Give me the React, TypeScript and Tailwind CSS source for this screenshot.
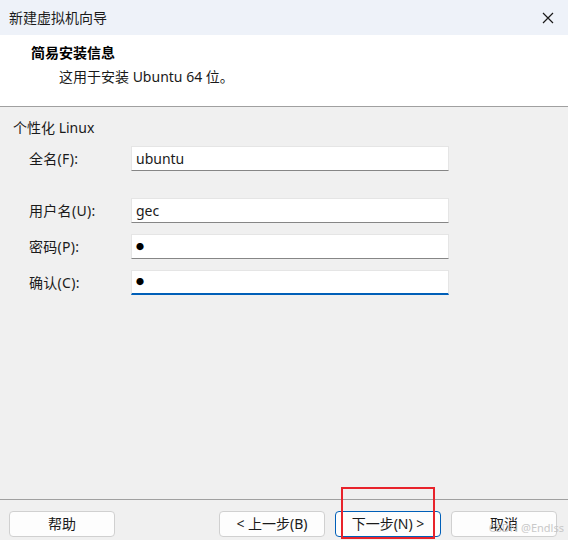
import React from "react";

const font = {
  fontFamily: '"Noto Sans", "Noto Sans CJK SC", sans-serif',
};

function Field({
  label,
  value,
  password,
  focused,
  className,
}: {
  label: string;
  value: string;
  password?: boolean;
  focused?: boolean;
  className?: string;
}) {
  return (
    <div className={"flex items-center " + (className ?? "")}>
      <div className="w-[131px] pl-[29px] shrink-0 text-[14px] leading-[20px] tracking-[0.3px] text-[#1a1a1a] whitespace-nowrap">
        {label}
      </div>
      <div
        className={
          "w-[318px] h-[25px] bg-white border border-[#e5e5e5] flex items-center pl-[4px] " +
          (focused
            ? "border-b-2 border-b-[#005fb8]"
            : "border-b border-b-[#868686]")
        }
      >
        {password ? (
          <span className="text-[8px] leading-none text-black">●</span>
        ) : (
          <span className="text-[14px] leading-[20px] text-[#1a1a1a]">{value}</span>
        )}
      </div>
    </div>
  );
}

function Btn({ children, primary }: { children: React.ReactNode; primary?: boolean }) {
  return (
    <div
      className={
        "w-[106px] h-[26px] rounded-[4px] bg-[#fdfdfd] flex items-center justify-center text-[14px] leading-[20px] text-[#1a1a1a] whitespace-nowrap " +
        (primary ? "border border-[#005fb8]" : "border border-[#d0d0d0]")
      }
    >
      {children}
    </div>
  );
}

export default function App() {
  return (
    <div style={font} className="relative w-[568px] h-[540px] bg-[#f0f0f0] flex flex-col overflow-hidden">
      {/* Title bar */}
      <div className="h-[35px] bg-[#eef2f9] flex items-center justify-between pl-[9px] pr-[14px] shrink-0">
        <span className="text-[14px] leading-[20px] text-[#1a1a1a]">新建虚拟机向导</span>
        <svg width="12" height="12" viewBox="0 0 12 12">
          <path d="M1 1 L11 11 M11 1 L1 11" stroke="#1a1a1a" strokeWidth="1.2" fill="none" />
        </svg>
      </div>

      {/* Header */}
      <div className="h-[72px] bg-white border-b border-[#a0a0a0] pt-[8px] shrink-0">
        <div className="pl-[31px] text-[14px] leading-[20px] font-bold text-black">简易安装信息</div>
        <div className="pl-[59px] mt-[4px] text-[14px] leading-[20px] text-[#1a1a1a]">
          这用于安装 Ubuntu 64 位。
        </div>
      </div>

      {/* Content */}
      <div className="flex-1 pt-[11px]">
        <div className="pl-[13px] text-[14px] leading-[20px] text-[#1a1a1a]">个性化 Linux</div>
        <Field className="mt-[8px]" label="全名(F):" value="ubuntu" />
        <Field className="mt-[27px]" label="用户名(U):" value="gec" />
        <Field className="mt-[11px]" label="密码(P):" value="" password />
        <Field className="mt-[11px]" label="确认(C):" value="" password focused />
      </div>

      {/* Footer */}
      <div className="h-[41px] border-t border-[#a0a0a0] pt-[11px] pl-[9px] pr-[11px] flex items-start shrink-0">
        <Btn>帮助</Btn>
        <div className="flex-1" />
        <div className="flex gap-[10px]">
          <Btn>&lt; 上一步(B)</Btn>
          <Btn primary>下一步(N) &gt;</Btn>
          <Btn>取消</Btn>
        </div>
      </div>

      {/* Annotation red rectangle */}
      <div className="absolute left-[341px] top-[487px] w-[94px] h-[52px] border-2 border-[#e8232b] pointer-events-none" />

      {/* Watermark */}
      <div className="absolute right-[4px] bottom-[5px] text-[11px] leading-[14px] text-[#c4c4c4] opacity-90 pointer-events-none">
        CSDN @Endlss
      </div>
    </div>
  );
}
